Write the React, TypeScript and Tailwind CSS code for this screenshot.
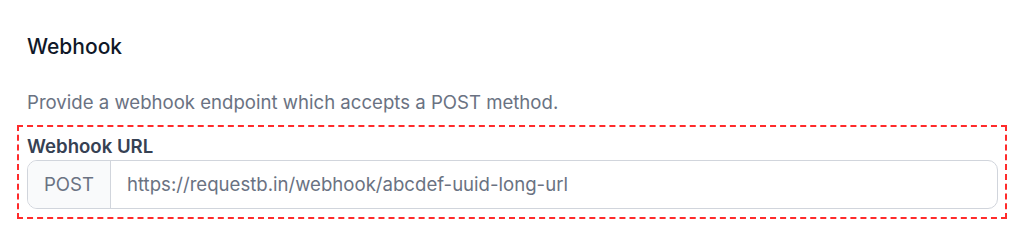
export default function App() {
  return (
    <div className="w-[1024px] h-[236px] bg-white font-['Inter',sans-serif] px-[27px] pt-[33px]">
      <h2 className="text-[21px] leading-[28px] font-medium text-gray-900">Webhook</h2>
      <p className="mt-[28px] text-[18.6px] leading-[26px] text-gray-500">
        Provide a webhook endpoint which accepts a POST method.
      </p>
      <div className="-mx-[10px] mt-[10px] border-2 border-dashed border-[#ff2b2b] pl-[8px] pr-[7px] pt-[6px] pb-[8px]">
        <label className="block text-[18.6px] leading-[26px] font-semibold text-gray-700">Webhook URL</label>
        <div className="mt-[1px] flex h-[49px] rounded-[10px] border border-gray-300 overflow-hidden">
          <span className="flex w-[83px] shrink-0 items-center justify-center border-r border-gray-300 bg-gray-50 text-[18.6px] text-gray-500">
            POST
          </span>
          <input
            className="flex-1 px-[16px] text-[18.6px] text-gray-500 outline-none"
            defaultValue="https://requestb.in/webhook/abcdef-uuid-long-url"
          />
        </div>
      </div>
    </div>
  );
}
